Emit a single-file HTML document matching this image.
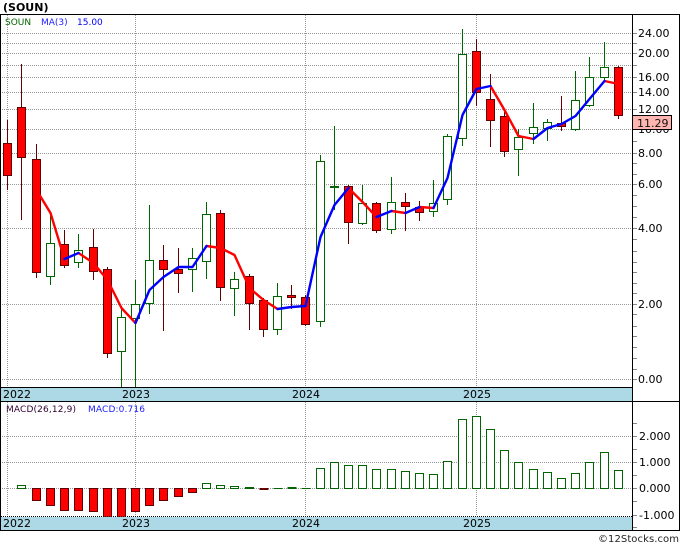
<!DOCTYPE html>
<html><head><meta charset="utf-8"><style>
html,body{margin:0;padding:0;background:#fff;width:680px;height:546px;overflow:hidden}
svg{display:block}
text{font-family:"DejaVu Sans","Liberation Sans",sans-serif;font-size:11px;fill:#000}
.r{fill:#f00;stroke:#600000;stroke-width:1}
.g{fill:#fff;stroke:#006400;stroke-width:1}
.l{fill:none;stroke-width:2.4;stroke-linejoin:round;stroke-linecap:round}
</style></head><body>
<svg width="680" height="546" viewBox="0 0 680 546" xmlns="http://www.w3.org/2000/svg">
<text x="3" y="11" style="font-weight:bold;font-size:11px">(SOUN)</text>
<!-- grid -->
<g shape-rendering="crispEdges">
<path stroke="#999" stroke-dasharray="1 1" fill="none" d="M2 33.5H632M2 43.5H632M2 53.5H632M2 65.5H632M2 77.5H632M2 92.5H632M2 109.5H632M2 129.5H632M2 153.5H632M2 184.5H632M2 228.5H632M2 304.5H632M2 379.5H632M7.5 15V387M135.5 15V387M305.5 15V387M476.5 15V387M2 436.5H632M2 462.5H632M2 488.5H632M7.5 402V516M135.5 402V516M305.5 402V516M476.5 402V516"/>
<path stroke="#888" fill="none" d="M633 33.5H637M633 43.5H637M633 53.5H637M633 65.5H637M633 77.5H637M633 92.5H637M633 109.5H637M633 141.5H637M633 153.5H637M633 163.5H637M633 174.5H637M633 184.5H637M633 195.5H637M633 206.5H637M633 217.5H637M633 228.5H637M633 239.5H637M633 251.5H637M633 262.5H637M633 272.5H637M633 283.5H637M633 293.5H637M633 304.5H637M633 314.5H637M633 326.5H637M633 336.5H637M633 347.5H637M633 358.5H637M633 369.5H637M633 379.5H637M633 423.5H637M633 436.5H637M633 449.5H637M633 462.5H637M633 475.5H637M633 488.5H637M633 501.5H637M633 515.5H637M633 527.5H637"/>
<!-- wicks -->
<path stroke="#600000" fill="none" d="M7.5 120V190M21.5 64V220M36.5 144V278M64.5 230V268M93.5 229V280M107.5 267V358M163.5 245V331M178.5 248V293M220.5 210V301M249.5 274V330M263.5 298V337M291.5 285V309M305.5 295V326M348.5 185V244M376.5 202V233M405.5 193V231M419.5 201V221M476.5 39V106M490.5 74V147M504.5 112V157M561.5 96V131M618.5 66V119"/>
<path stroke="#006400" fill="none" d="M50.5 212V285M78.5 234V268M121.5 308V387M135.5 280V387M149.5 205V314M192.5 248V292M206.5 202V279M234.5 272V316M277.5 283V335M320.5 155V327M334.5 126V210M362.5 185V225M391.5 177V234M433.5 180V217M447.5 134V205M462.5 29V146M518.5 129V176M533.5 103V144M547.5 119V141M575.5 71V131M589.5 57V107M604.5 42V81"/>
<!-- bodies -->
<rect class="r" x="3.5" y="143.5" width="8" height="32"/>
<rect class="r" x="17.5" y="107.5" width="8" height="50"/>
<rect class="r" x="32.5" y="159.5" width="8" height="113"/>
<rect class="g" x="46.5" y="243.5" width="8" height="33"/>
<rect class="r" x="60.5" y="244.5" width="8" height="21"/>
<rect class="g" x="74.5" y="250.5" width="8" height="12"/>
<rect class="r" x="89.5" y="247.5" width="8" height="24"/>
<rect class="r" x="103.5" y="269.5" width="8" height="84"/>
<rect class="g" x="117.5" y="317.5" width="8" height="34"/>
<rect class="g" x="131.5" y="304.5" width="8" height="14"/>
<rect class="g" x="145.5" y="260.5" width="8" height="43"/>
<rect class="r" x="159.5" y="260.5" width="8" height="9"/>
<rect class="r" x="174.5" y="269.5" width="8" height="4"/>
<rect class="g" x="188.5" y="258.5" width="8" height="11"/>
<rect class="g" x="202.5" y="214.5" width="8" height="47"/>
<rect class="r" x="216.5" y="213.5" width="8" height="74"/>
<rect class="g" x="230.5" y="279.5" width="8" height="9"/>
<rect class="r" x="245.5" y="276.5" width="8" height="27"/>
<rect class="r" x="259.5" y="300.5" width="8" height="29"/>
<rect class="g" x="273.5" y="296.5" width="8" height="33"/>
<rect class="r" x="287.5" y="295.5" width="8" height="2"/>
<rect class="r" x="301.5" y="297.5" width="8" height="27"/>
<rect class="g" x="316.5" y="161.5" width="8" height="160"/>
<rect class="g" x="330.5" y="186.5" width="8" height="1"/>
<rect class="r" x="344.5" y="186.5" width="8" height="36"/>
<rect class="g" x="358.5" y="203.5" width="8" height="20"/>
<rect class="r" x="372.5" y="203.5" width="8" height="27"/>
<rect class="g" x="387.5" y="202.5" width="8" height="27"/>
<rect class="r" x="401.5" y="202.5" width="8" height="4"/>
<rect class="r" x="415.5" y="207.5" width="8" height="5"/>
<rect class="g" x="429.5" y="203.5" width="8" height="8"/>
<rect class="g" x="443.5" y="136.5" width="8" height="63"/>
<rect class="g" x="458.5" y="54.5" width="8" height="84"/>
<rect class="r" x="472.5" y="51.5" width="8" height="41"/>
<rect class="r" x="486.5" y="99.5" width="8" height="21"/>
<rect class="r" x="500.5" y="116.5" width="8" height="35"/>
<rect class="g" x="514.5" y="137.5" width="8" height="12"/>
<rect class="g" x="529.5" y="127.5" width="8" height="6"/>
<rect class="g" x="543.5" y="122.5" width="8" height="6"/>
<rect class="r" x="557.5" y="123.5" width="8" height="3"/>
<rect class="g" x="571.5" y="100.5" width="8" height="29"/>
<rect class="g" x="585.5" y="77.5" width="8" height="28"/>
<rect class="g" x="600.5" y="67.5" width="8" height="10"/>
<rect class="r" x="614.5" y="67.5" width="8" height="48"/>
<!-- MACD bars -->
<rect class="g" x="17.5" y="485.5" width="8" height="3"/>
<rect class="r" x="32.5" y="488.5" width="8" height="12"/>
<rect class="r" x="46.5" y="488.5" width="8" height="17"/>
<rect class="r" x="60.5" y="488.5" width="8" height="22"/>
<rect class="r" x="74.5" y="488.5" width="8" height="22"/>
<rect class="r" x="89.5" y="488.5" width="8" height="23"/>
<rect class="r" x="103.5" y="488.5" width="8" height="29"/>
<rect class="r" x="117.5" y="488.5" width="8" height="29"/>
<rect class="r" x="131.5" y="488.5" width="8" height="23"/>
<rect class="r" x="145.5" y="488.5" width="8" height="17"/>
<rect class="r" x="159.5" y="488.5" width="8" height="12"/>
<rect class="r" x="174.5" y="488.5" width="8" height="8"/>
<rect class="r" x="188.5" y="488.5" width="8" height="4"/>
<rect class="g" x="202.5" y="483.5" width="8" height="5"/>
<rect class="g" x="216.5" y="485.5" width="8" height="3"/>
<rect class="g" x="230.5" y="486.5" width="8" height="2"/>
<rect class="g" x="245.5" y="487.5" width="8" height="1"/>
<rect x="259.5" y="488" width="9" height="2" fill="#600000"/>
<rect x="273.5" y="488" width="9" height="1" fill="#006400"/>
<rect x="287.5" y="487" width="9" height="2" fill="#006400"/>
<rect x="301.5" y="488" width="9" height="1" fill="#006400"/>
<rect class="g" x="316.5" y="468.5" width="8" height="20"/>
<rect class="g" x="330.5" y="462.5" width="8" height="26"/>
<rect class="g" x="344.5" y="465.5" width="8" height="23"/>
<rect class="g" x="358.5" y="465.5" width="8" height="23"/>
<rect class="g" x="372.5" y="469.5" width="8" height="19"/>
<rect class="g" x="387.5" y="469.5" width="8" height="19"/>
<rect class="g" x="401.5" y="471.5" width="8" height="17"/>
<rect class="g" x="415.5" y="473.5" width="8" height="15"/>
<rect class="g" x="429.5" y="474.5" width="8" height="14"/>
<rect class="g" x="443.5" y="461.5" width="8" height="27"/>
<rect class="g" x="458.5" y="419.5" width="8" height="69"/>
<rect class="g" x="472.5" y="416.5" width="8" height="72"/>
<rect class="g" x="486.5" y="429.5" width="8" height="59"/>
<rect class="g" x="500.5" y="450.5" width="8" height="38"/>
<rect class="g" x="514.5" y="462.5" width="8" height="26"/>
<rect class="g" x="529.5" y="469.5" width="8" height="19"/>
<rect class="g" x="543.5" y="472.5" width="8" height="16"/>
<rect class="g" x="557.5" y="478.5" width="8" height="10"/>
<rect class="g" x="571.5" y="473.5" width="8" height="15"/>
<rect class="g" x="585.5" y="462.5" width="8" height="26"/>
<rect class="g" x="600.5" y="452.5" width="8" height="36"/>
<rect class="g" x="614.5" y="470.5" width="8" height="18"/>
</g>
<!-- moving average -->
<path class="l" stroke="#f00" d="M36.5 190L50.5 213L64.5 259M78.5 253L93.5 263L107.5 280L121.5 308L135.5 323M206.5 246L220.5 248L234.5 255L249.5 288L263.5 300L277.5 309M348.5 188L362.5 202L376.5 217M391.5 211L405.5 213M419.5 207L433.5 208M490.5 86L504.5 110L518.5 136L533.5 139M604.5 81L618.5 84"/>
<path class="l" stroke="#00f" d="M64.5 259L78.5 253M135.5 323L149.5 290L163.5 277L178.5 267L192.5 267L206.5 246M277.5 309L291.5 307L305.5 306L320.5 237L334.5 205L348.5 188M376.5 217L391.5 211M405.5 213L419.5 207M433.5 208L447.5 178L462.5 115L476.5 89L490.5 86M533.5 139L547.5 128L561.5 124L575.5 116L589.5 99L604.5 81"/>
<!-- bands & frame -->
<g shape-rendering="crispEdges">
<rect x="1" y="388" width="631" height="13" fill="#add8e6"/>
<rect x="1" y="517" width="631" height="13" fill="#add8e6"/>
<rect x="0" y="14" width="680" height="1" fill="#000"/>
<rect x="0" y="14" width="1" height="517" fill="#000"/>
<rect x="632" y="14" width="1" height="517" fill="#000"/>
<rect x="679" y="14" width="1" height="517" fill="#000"/>
<rect x="0" y="387" width="632" height="1" fill="#000"/>
<rect x="0" y="401" width="680" height="1" fill="#000"/>
<path stroke="#000" stroke-dasharray="1 1" fill="none" d="M1 516.5H632"/>
<rect x="0" y="530" width="680" height="1" fill="#000"/>
</g>
<!-- text -->
<text x="5" y="25" style="font-size:9px;fill:#006400">SOUN</text>
<text x="41" y="25" style="font-size:9px;fill:#2020ff">MA(3)</text>
<text x="77" y="25" style="font-size:9px;fill:#00f">15.00</text>
<text x="6" y="412" textLength="70" style="font-size:9px;fill:#300030">MACD(26,12,9)</text>
<text x="88" y="412" textLength="57" style="font-size:9px;fill:#2020ff">MACD:0.716</text>
<text x="3" y="398">2022</text><text x="122" y="398">2023</text><text x="292" y="398">2024</text><text x="463" y="398">2025</text>
<text x="3" y="527">2022</text><text x="122" y="527">2023</text><text x="292" y="527">2024</text><text x="463" y="527">2025</text>
<text x="638" y="37">24.00</text>
<text x="638" y="57">20.00</text>
<text x="638" y="81">16.00</text>
<text x="638" y="96">14.00</text>
<text x="638" y="113">12.00</text>
<text x="638" y="133">10.00</text>
<text x="638" y="157">8.00</text>
<text x="638" y="188">6.00</text>
<text x="638" y="232">4.00</text>
<text x="638" y="308">2.00</text>
<text x="638" y="383">0.00</text>
<rect x="632.5" y="115.5" width="39" height="14" fill="#ffb6b0" stroke="#000" shape-rendering="crispEdges"/>
<text x="637" y="127" style="fill:#111">11.29</text>
<text x="639" y="440">2.000</text>
<text x="639" y="466">1.000</text>
<text x="639" y="492">0.000</text>
<text x="639" y="519">-1.000</text>
<text x="598" y="542" style="font-size:10px;fill:#222">©</text>
<text x="608" y="542" textLength="71" style="font-size:10px;fill:#222">12Stocks.com</text>
</svg>
</body></html>
